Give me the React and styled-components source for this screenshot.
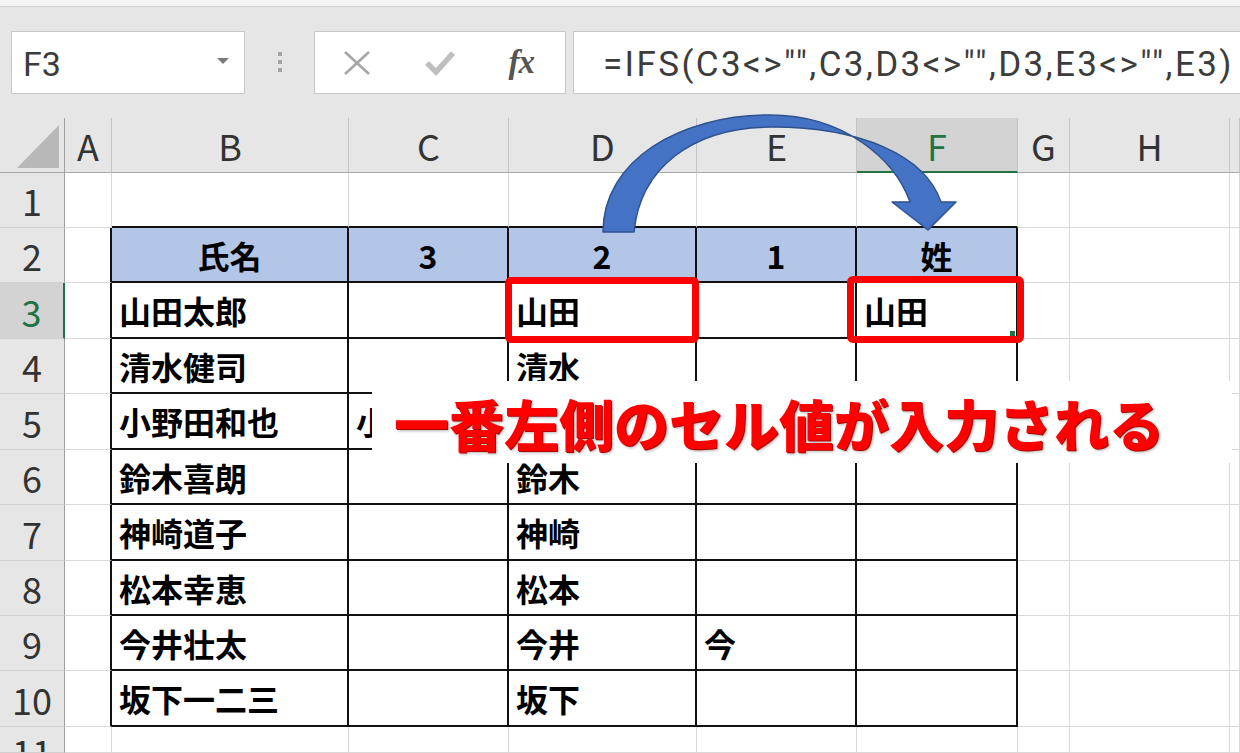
import React from 'react';
import styled, { createGlobalStyle } from 'styled-components';

const GlobalStyle = createGlobalStyle`
  html, body { margin: 0; padding: 0; background: #fff; }
  body { overflow: hidden; }
  * { box-sizing: border-box; }
`;

const COLS = [65, 47, 237, 160, 188, 160, 161, 52, 160, 10];
const ROWS = [55, 55, 55, 56, 55, 56, 55, 56, 55, 55, 56, 26];
const LETTERS = ['', 'A', 'B', 'C', 'D', 'E', 'F', 'G', 'H', ''];

const DATA = {
  '2-2': '氏名', '2-3': '3', '2-4': '2', '2-5': '1', '2-6': '姓',
  '3-2': '山田太郎', '3-4': '山田', '3-6': '山田',
  '4-2': '清水健司', '4-4': '清水',
  '5-2': '小野田和也', '5-3': '小野田',
  '6-2': '鈴木喜朗', '6-4': '鈴木',
  '7-2': '神崎道子', '7-4': '神崎',
  '8-2': '松本幸恵', '8-4': '松本',
  '9-2': '今井壮太', '9-4': '今井', '9-5': '今',
  '10-2': '坂下一二三', '10-4': '坂下',
};

const HIGHLIGHTS = {
  '3-4': { top: -6, left: -4, right: -4, bottom: -6 },
  '3-6': { top: -7, left: -10, right: -8, bottom: -6 },
};

const Frame = styled.div`
  position: relative;
  width: 1240px;
  height: 753px;
  overflow: hidden;
  background: #fff;
  font-family: "Noto Sans CJK JP", sans-serif;
`;

const TopStrip = styled.div`
  height: 7px;
  background: #f4f4f4;
  border-bottom: 1px solid #d4d4d4;
`;

const FormulaBar = styled.div`
  height: 111px;
  background: #e6e6e6;
  display: flex;
  align-items: flex-start;
  padding-top: 24px;
`;

const NameBox = styled.div`
  margin-left: 11px;
  width: 234px;
  height: 63px;
  background: #fff;
  border: 1px solid #c8c8c8;
  display: flex;
  align-items: center;
  justify-content: space-between;
  padding: 0 15px 0 11px;
`;

const BarText = styled.span`
  font-family: Roboto, "Liberation Sans", sans-serif;
  font-size: ${(p) => p.$size}px;
  letter-spacing: ${(p) => p.$spacing || 0}px;
  color: #3c3c3c;
  line-height: 1;
  white-space: nowrap;
  padding-top: 3px;
`;

const Caret = styled.span`
  width: 0;
  height: 0;
  border-left: 6px solid transparent;
  border-right: 6px solid transparent;
  border-top: 6px solid #7a7a7a;
  margin-top: -4px;
`;

const Grip = styled.div`
  width: 69px;
  height: 63px;
  display: flex;
  flex-direction: column;
  align-items: center;
  justify-content: center;
  gap: 4px;
  padding-bottom: 2px;
`;

const GripDot = styled.span`
  width: 4px;
  height: 4px;
  background: #a3a3a3;
`;

const ActionBox = styled.div`
  width: 252px;
  height: 63px;
  background: #fff;
  border: 1px solid #c8c8c8;
  display: flex;
`;

const ActionSlot = styled.div`
  width: 84px;
  height: 100%;
  display: flex;
  align-items: center;
  justify-content: center;
`;

const FxGlyph = styled.span`
  font-family: "Liberation Serif", "DejaVu Serif", serif;
  font-style: italic;
  font-weight: 700;
  font-size: 33px;
  color: #555;
  letter-spacing: -1px;
  line-height: 1;
  margin-left: -4px;
`;

const FormulaBox = styled.div`
  margin-left: 7px;
  flex: 1;
  height: 63px;
  background: #fff;
  border: 1px solid #c8c8c8;
  border-right: none;
  display: flex;
  align-items: center;
  padding-left: 29px;
  overflow: hidden;
`;

const Sheet = styled.div`
  display: grid;
  grid-template-columns: ${COLS.map((c) => `${c}px`).join(' ')};
  grid-template-rows: ${ROWS.map((r) => `${r}px`).join(' ')};
`;

const HeaderCell = styled.div`
  position: relative;
  background: ${(p) => (p.$selected ? '#d3d3d3' : '#e6e6e6')};
  color: ${(p) => (p.$selected ? '#217346' : '#333')};
  border-right: ${(p) => p.$rb};
  border-bottom: ${(p) => p.$bb};
  display: flex;
  align-items: ${(p) => (p.$top ? 'flex-start' : 'center')};
  padding-top: ${(p) => (p.$top ? 6 : 0)}px;
  justify-content: center;
  font-family: "Noto Sans CJK JP", sans-serif;
  font-size: 36px;
  font-weight: 400;
  line-height: 1;
  overflow: hidden;
`;

const CornerTriangle = styled.span`
  position: absolute;
  right: 5px;
  bottom: 4px;
  width: 42px;
  height: 43px;
  background: #b8b8b8;
  clip-path: polygon(100% 0, 100% 100%, 0 100%);
`;

const Cell = styled.div`
  position: relative;
  background: ${(p) => (p.$head ? '#b4c6e7' : '#fff')};
  border-right: ${(p) => p.$rb};
  border-bottom: ${(p) => p.$bb};
  display: flex;
  align-items: center;
  justify-content: ${(p) => (p.$head ? 'center' : 'flex-start')};
  padding-left: ${(p) => (p.$head ? 0 : 7)}px;
  font-family: "Noto Sans CJK JP", sans-serif;
  font-size: 32px;
  font-weight: 700;
  color: #000;
  line-height: 1;
  white-space: nowrap;
`;

const Highlight = styled.span`
  position: absolute;
  top: ${(p) => p.$box.top}px;
  left: ${(p) => p.$box.left}px;
  right: ${(p) => p.$box.right}px;
  bottom: ${(p) => p.$box.bottom}px;
  border: 7px solid #ff0000;
  border-radius: 6px;
  z-index: 2;
`;

const FillHandle = styled.span`
  position: absolute;
  right: 1px;
  bottom: 1px;
  width: 5px;
  height: 5px;
  background: #217346;
`;

const ArrowLayer = styled.svg`
  position: absolute;
  left: 0;
  top: 0;
  pointer-events: none;
  z-index: 3;
`;

const Callout = styled.div`
  position: absolute;
  left: 372px;
  top: 381px;
  width: 860px;
  height: 82px;
  background: #fff;
  display: flex;
  align-items: center;
  padding-left: 22px;
  z-index: 4;
`;

const CalloutText = styled.span`
  font-family: "Noto Sans CJK JP", sans-serif;
  font-size: 55px;
  font-weight: 900;
  color: #ff0000;
  line-height: 1;
  white-space: nowrap;
  text-shadow: 1px 1px 0 #b00000, 2px 2px 3px rgba(0, 0, 0, 0.3);
`;

const GRID = '1px solid #d9d9d9';
const BLACK = '2px solid #111';

function cellBorders(r, c) {
  const inTable = r >= 2 && r <= 10 && c >= 2 && c <= 6;
  let rb = GRID;
  let bb = GRID;
  if (inTable || (c === 1 && r >= 2 && r <= 10)) rb = BLACK;
  if (inTable || (r === 1 && c >= 2 && c <= 6)) bb = BLACK;
  return { rb, bb };
}

function XIcon() {
  return (
    <svg width="28" height="24" viewBox="0 0 28 24">
      <path d="M2 1 L26 23 M26 1 L2 23" stroke="#a6a6a6" strokeWidth="2.6" fill="none" />
    </svg>
  );
}

function CheckIcon() {
  return (
    <svg width="30" height="26" viewBox="0 0 30 26">
      <path d="M2 13 L11 22 L28 3" stroke="#bfbfbf" strokeWidth="5.5" fill="none" strokeLinejoin="miter" />
    </svg>
  );
}

export default function App() {
  const cells = [];
  ROWS.forEach((_, r) => {
    COLS.forEach((__, c) => {
      const key = `${r}-${c}`;
      if (r === 0 && c === 0) {
        cells.push(
          <HeaderCell key={key} $rb="1px solid #a0a0a0" $bb="1px solid #a9a9a9">
            <CornerTriangle />
          </HeaderCell>
        );
      } else if (r === 0) {
        const sel = c === 6;
        cells.push(
          <HeaderCell
            key={key}
            $selected={sel}
            $rb="1px solid #c4c4c4"
            $bb={sel ? '2px solid #217346' : '1px solid #a9a9a9'}
          >
            {LETTERS[c]}
          </HeaderCell>
        );
      } else if (c === 0) {
        const sel = r === 3;
        cells.push(
          <HeaderCell
            key={key}
            $selected={sel}
            $top={r === 11}
            $rb={sel ? '2px solid #217346' : '1px solid #a0a0a0'}
            $bb="1px solid #d0d0d0"
          >
            {r}
          </HeaderCell>
        );
      } else {
        const { rb, bb } = cellBorders(r, c);
        const hl = HIGHLIGHTS[`${r}-${c}`];
        cells.push(
          <Cell key={key} $rb={rb} $bb={bb} $head={r === 2 && c >= 2 && c <= 6}>
            {DATA[`${r}-${c}`] || ''}
            {hl && <Highlight $box={hl} />}
            {r === 3 && c === 6 && <FillHandle />}
          </Cell>
        );
      }
    });
  });

  return (
    <Frame>
      <GlobalStyle />
      <TopStrip />
      <FormulaBar>
        <NameBox>
          <BarText $size={34}>F3</BarText>
          <Caret />
        </NameBox>
        <Grip>
          <GripDot />
          <GripDot />
          <GripDot />
        </Grip>
        <ActionBox>
          <ActionSlot><XIcon /></ActionSlot>
          <ActionSlot><CheckIcon /></ActionSlot>
          <ActionSlot><FxGlyph>fx</FxGlyph></ActionSlot>
        </ActionBox>
        <FormulaBox>
          <BarText $size={35} $spacing={2.4}>{'=IFS(C3<>"",C3,D3<>"",D3,E3<>"",E3)'}</BarText>
        </FormulaBox>
      </FormulaBar>
      <Sheet>{cells}</Sheet>
      <ArrowLayer width="1240" height="753" viewBox="0 0 1240 753">
        <path
          d="M603 232 C603 160 680 115 770 115 C845 115 895 160 910 202 L892 202 L928 230 L956 202 L941 202 C925 155 860 127 772 127 C690 127 640 170 634 232 Z"
          fill="#4472c4"
          stroke="#2f528f"
          strokeWidth="1.5"
          strokeLinejoin="round"
        />
      </ArrowLayer>
      <Callout>
        <CalloutText>一番左側のセル値が入力される</CalloutText>
      </Callout>
    </Frame>
  );
}
